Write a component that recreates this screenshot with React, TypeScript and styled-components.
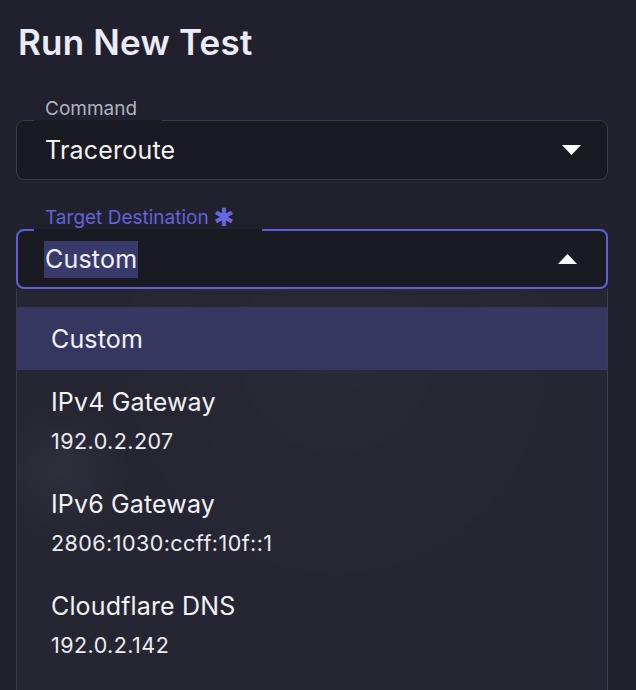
import React from 'react';
import styled, { createGlobalStyle } from 'styled-components';

const GlobalStyle = createGlobalStyle`
  html, body {
    margin: 0;
    padding: 0;
    background: #20212d;
  }
  body {
    font-family: Inter, "Noto Sans", "Liberation Sans", sans-serif;
    color: #f0f0f6;
    overflow: hidden;
  }
`

const Page = styled.div`
  min-height: 690px;
  padding: 22px 28px 0 16px;
  box-sizing: border-box;
  display: flex;
  flex-direction: column;
`

const Title = styled.h1`
  margin: 0 0 0 2px;
  font-size: 35px;
  line-height: 40px;
  font-weight: 600;
  color: #ecebfa;
  letter-spacing: 0.2px;
`

const Field = styled.div<{ $top: number }>`
  position: relative;
  margin-top: ${p => p.$top}px;
`

const Label = styled.label<{ $active?: boolean }>`
  position: absolute;
  top: -21px;
  left: 29px;
  font-size: 19px;
  line-height: 20px;
  color: ${p => (p.$active ? '#6363d9' : '#b3b3bc')};
  display: flex;
  align-items: center;
  gap: 5px;
  z-index: 2;
`

const Star = styled.span`
  font-family: "DejaVu Sans", sans-serif;
  font-size: 25px;
  line-height: 20px;
  color: #6767e0;
`

const Notch = styled.span<{ $width: number; $border: number }>`
  position: absolute;
  top: 0;
  left: 18px;
  width: ${p => p.$width}px;
  height: ${p => p.$border}px;
  background: #1a1a23;
  z-index: 1;
`

const Box = styled.div<{ $active?: boolean }>`
  height: 60px;
  box-sizing: border-box;
  border: ${p => (p.$active ? '2px solid #6060d6' : '1px solid #393a4b')};
  border-radius: 8px;
  background: #1a1a23;
  display: flex;
  align-items: center;
  justify-content: space-between;
  padding: 0 ${p => (p.$active ? 29 : 26)}px 0 ${p => (p.$active ? 27 : 28)}px;
  font-size: 25px;
  letter-spacing: 0.2px;
  color: #f1f1f6;
`

const Selected = styled.span`
  background: #393a6c;
  line-height: 37px;
  padding: 0 1px;
  margin-left: -1px;
`

const Caret = styled.svg`
  width: 19px;
  height: 10px;
  fill: #ffffff;
  flex-shrink: 0;
`

const Menu = styled.ul`
  list-style: none;
  margin: 0;
  flex: 1;
  padding: 18px 0 0;
  border-left: 1px solid #393a4c;
  border-right: 1px solid #3d3e52;
  background:
    radial-gradient(circle at 44px 182px, rgba(255, 255, 255, 0.045), rgba(255, 255, 255, 0) 70px),
    radial-gradient(ellipse at 320px 60px, rgba(255, 255, 255, 0.02), rgba(255, 255, 255, 0) 240px),
    #262633;
`

const Option = styled.li<{ $highlighted?: boolean }>`
  padding: 14px 34px 13px;
  background: ${p => (p.$highlighted ? '#363761' : 'transparent')};
  color: #f2f2f7;
`

const OptionTitle = styled.div`
  font-size: 25px;
  line-height: 36px;
  letter-spacing: 0.15px;
`

const OptionSub = styled.div`
  margin-top: 4px;
  margin-bottom: 1px;
  font-size: 21.5px;
  line-height: 34px;
  letter-spacing: 0.45px;
  color: #ececf2;
`

type Target = {
  name: string
  address?: string
}

const targets: Target[] = [
  { name: 'Custom' },
  { name: 'IPv4 Gateway', address: '192.0.2.207' },
  { name: 'IPv6 Gateway', address: '2806:1030:ccff:10f::1' },
  { name: 'Cloudflare DNS', address: '192.0.2.142' },
];

function DownCaret() {
  return (
    <Caret viewBox="0 0 19 10">
      <path d="M0 0 L19 0 L9.5 10 Z" />
    </Caret>
  );
}

function UpCaret() {
  return (
    <Caret viewBox="0 0 19 10">
      <path d="M0 10 L19 10 L9.5 0 Z" />
    </Caret>
  );
}

export default function App() {
  return (
    <>
      <GlobalStyle />
      <Page>
        <Title>Run New Test</Title>
        <Field $top={58}>
          <Label>Command</Label>
          <Notch $width={128} $border={1} />
          <Box>
            <span>Traceroute</span>
            <DownCaret />
          </Box>
        </Field>
        <Field $top={49}>
          <Label $active>
            Target Destination<Star>✱</Star>
          </Label>
          <Notch $width={228} $border={2} />
          <Box $active>
            <Selected>Custom</Selected>
            <UpCaret />
          </Box>
        </Field>
        <Menu>
          {targets.map((t, i) => (
            <Option key={t.name} $highlighted={i === 0}>
              <OptionTitle>{t.name}</OptionTitle>
              {t.address && <OptionSub>{t.address}</OptionSub>}
            </Option>
          ))}
        </Menu>
      </Page>
    </>
  );
}
